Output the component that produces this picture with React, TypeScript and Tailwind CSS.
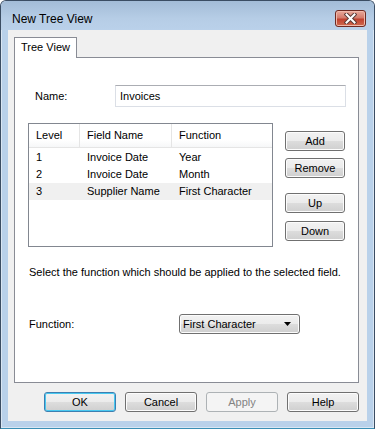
import React from "react";

const font = { fontFamily: '"Liberation Sans", Arial, sans-serif' };

const styles = {
  face: `rounded-[3px] border border-[#707070] bg-[linear-gradient(#f2f2f2,#ebebeb_50%,#dddddd_50%,#cfcfcf)] shadow-[inset_0_0_0_1px_#fcfcfc] text-[11px] text-black`,
  btn: `flex items-center justify-center`,
  col: `px-[7px] flex items-center`,
};

const rows = [
  { level: "1", field: "Invoice Date", fn: "Year" },
  { level: "2", field: "Invoice Date", fn: "Month" },
  { level: "3", field: "Supplier Name", fn: "First Character" },
];

function CloseButton() {
  return (
    <div className="w-[31px] h-[17px] rounded-[3px] border border-[#6e2a22] bg-[linear-gradient(#e9a99b,#d47b6c_45%,#c0412f_55%,#cf6a4f)] shadow-[inset_0_0_0_1px_#f0b8aa] flex items-center justify-center">
      <svg width="13" height="11" viewBox="0 0 13 11">
        <path d="M2.5 1.5 L10.5 9.5 M10.5 1.5 L2.5 9.5" stroke="#5a3a36" strokeWidth="4" strokeLinecap="square" />
        <path d="M2.5 1.5 L10.5 9.5 M10.5 1.5 L2.5 9.5" stroke="#ffffff" strokeWidth="2" strokeLinecap="square" />
      </svg>
    </div>
  );
}

export default function App() {
  return (
    <div style={font} className="w-[375px] h-[429px] overflow-hidden bg-white">
      <div className="w-[375px] h-[429px] flex flex-col rounded-t-[6px] border border-[#3b4d63] border-b-[#3a8fb5] bg-[#b9d1ea] shadow-[inset_0_0_0_1px_#d9e6f3]">
        {/* title bar */}
        <div className="h-[29px] shrink-0 flex items-start justify-between rounded-t-[5px] bg-[linear-gradient(#a3bcd7,#b6cde6_60%,#bad1ea)] pl-[11px] pr-[8px]">
          <span className="mt-[11px] text-[12px] leading-[15px] text-black">New Tree View</span>
          <div className="mt-[9px]">
            <CloseButton />
          </div>
        </div>

        {/* client */}
        <div className="mx-[7px] w-[359px] h-[391px] bg-[#f0f0f0] flex flex-col">
          <div className="ml-[6px] mt-[7px] w-[63px] h-[21px] -mb-px relative z-10 border border-b-0 border-[#898c95] bg-white flex items-center justify-center text-[11px] pb-px">
            Tree View
          </div>
          <div className="ml-[6px] w-[345px] h-[326px] border border-[#898c95] bg-white flex flex-col text-[11px] text-black">
            {/* name row */}
            <div className="mt-[27px] flex items-center">
              <span className="ml-[20px] w-[80px]">Name:</span>
              <div className="w-[231px] h-[22px] border border-[#dbdfe6] border-t-[#abadb3] bg-white flex items-center pl-[4px]">
                Invoices
              </div>
            </div>

            {/* list + buttons */}
            <div className="mt-[16px] flex">
              <div className="ml-[13px] w-[245px] h-[124px] border border-[#828790] bg-white flex flex-col">
                <div className="h-[24px] flex bg-[linear-gradient(#ffffff,#ffffff_70%,#f6f7f8)] border-b border-[#e5e5e5]">
                  <div className={`${styles.col} w-[51px] border-r border-[#e5e5e5]`}>Level</div>
                  <div className={`${styles.col} w-[92px] border-r border-[#e5e5e5]`}>Field Name</div>
                  <div className={`${styles.col} flex-1`}>Function</div>
                </div>
                <div className="mt-[1px] flex flex-col">
                  {rows.map((r, i) => (
                    <div
                      key={i}
                      className={`h-[17px] flex ${i == 2 ? "bg-[#f0f0f0]" : ""}`}
                    >
                      <div className={`${styles.col} w-[51px]`}>{r.level}</div>
                      <div className={`${styles.col} w-[92px]`}>{r.field}</div>
                      <div className={`${styles.col} flex-1`}>{r.fn}</div>
                    </div>
                  ))}
                </div>
              </div>
              <div className="ml-[12px] mt-[8px] flex flex-col">
                <button className={`${styles.face} ${styles.btn} w-[60px] h-[20px]`}>Add</button>
                <button className={`${styles.face} ${styles.btn} w-[60px] h-[20px] mt-[7px]`}>Remove</button>
                <button className={`${styles.face} ${styles.btn} w-[60px] h-[20px] mt-[15px]`}>Up</button>
                <button className={`${styles.face} ${styles.btn} w-[60px] h-[20px] mt-[8px]`}>Down</button>
              </div>
            </div>

            <p className="ml-[14px] mt-[19px] leading-[13px]">
              Select the function which should be applied to the selected field.
            </p>

            {/* function row */}
            <div className="mt-[35px] flex items-center">
              <span className="ml-[14px] w-[150px]">Function:</span>
              <div className={`${styles.face} w-[121px] h-[20px] flex items-center justify-between pl-[3px] pr-[8px]`}>
                <span>First Character</span>
                <svg width="7" height="4" viewBox="0 0 7 4">
                  <path d="M0 0 H7 L3.5 4 Z" fill="#000" />
                </svg>
              </div>
            </div>
          </div>

          {/* dialog buttons */}
          <div className="mt-[9px] flex justify-end gap-[9px] pr-[8px]">
            <button className={`${styles.btn} w-[72px] h-[20px] rounded-[3px] border border-[#3c7fb1] bg-[linear-gradient(#f2f2f2,#ebebeb_50%,#dddddd_50%,#cfcfcf)] shadow-[inset_0_0_0_1px_#48c8f0] text-[11px] text-black`}>OK</button>
            <button className={`${styles.face} ${styles.btn} w-[72px] h-[20px]`}>Cancel</button>
            <button className="w-[72px] h-[20px] rounded-[3px] border border-[#adb2b5] bg-[#f4f4f4] text-[11px] text-[#838383] flex items-center justify-center">Apply</button>
            <button className={`${styles.face} ${styles.btn} w-[72px] h-[20px]`}>Help</button>
          </div>
        </div>
      </div>
    </div>
  );
}
